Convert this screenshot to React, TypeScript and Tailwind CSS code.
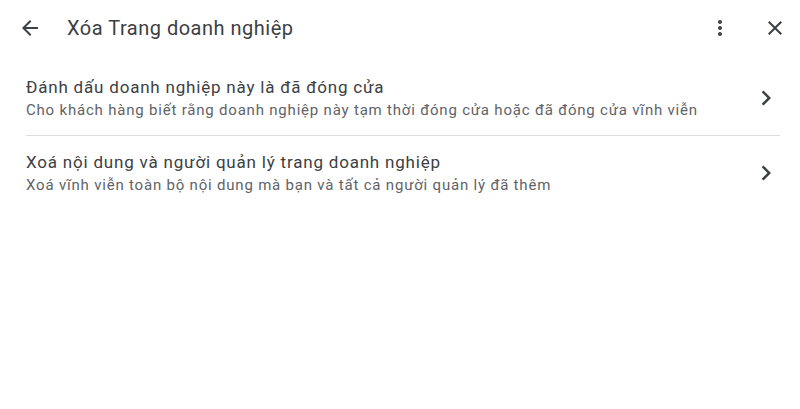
import React from "react";

const rows = [
  {
    title: "Đánh dấu doanh nghiệp này là đã đóng cửa",
    sub: "Cho khách hàng biết rằng doanh nghiệp này tạm thời đóng cửa hoặc đã đóng cửa vĩnh viễn",
  },
  {
    title: "Xoá nội dung và người quản lý trang doanh nghiệp",
    sub: "Xoá vĩnh viễn toàn bộ nội dung mà bạn và tất cả người quản lý đã thêm",
  },
];

function Chevron() {
  return (
    <svg width="30" height="30" viewBox="0 0 24 24" fill="#3c4043">
      <path d="M8.59 16.59 13.17 12 8.59 7.41 10 6l6 6-6 6z" />
    </svg>
  );
}

export default function App() {
  return (
    <div
      className="w-[800px] h-[409px] bg-white text-[#3c4043]"
      style={{ fontFamily: "Roboto, 'Noto Sans', sans-serif" }}
    >
      <header className="flex items-center h-[56px] pl-[18px] pr-[13px]">
        <svg width="24" height="24" viewBox="0 0 24 24" fill="#3c4043">
          <path d="M20 11H7.83l5.59-5.59L12 4l-8 8 8 8 1.41-1.41L7.83 13H20v-2z" />
        </svg>
        <h1 className="ml-[25px] text-[20px] tracking-[0.5px] font-normal text-[#3c4043] flex-1">
          Xóa Trang doanh nghiệp
        </h1>
        <svg width="24" height="24" viewBox="0 0 24 24" fill="#3c4043">
          <path d="M12 8c1.1 0 2-.9 2-2s-.9-2-2-2-2 .9-2 2 .9 2 2 2zm0 2c-1.1 0-2 .9-2 2s.9 2 2 2 2-.9 2-2-.9-2-2-2zm0 6c-1.1 0-2 .9-2 2s.9 2 2 2 2-.9 2-2-.9-2-2-2z" />
        </svg>
        <svg className="ml-[31px]" width="24" height="24" viewBox="0 0 24 24" fill="#3c4043">
          <path d="M19 6.41 17.59 5 12 10.59 6.41 5 5 6.41 10.59 12 5 17.59 6.41 19 12 13.41 17.59 19 19 17.59 13.41 12z" />
        </svg>
      </header>
      <div className="ml-[26px] mr-[20px]">
        {rows.map((r, i) => (
          <div
            key={i}
            className={
              "flex items-center pb-[14px] " +
              (i === 0 ? "pt-[19px] border-b border-[#dadce0]" : "pt-[14px]")
            }
          >
            <div className="flex-1">
              <div className="text-[17px] leading-[24px] tracking-[0.8px] text-[#3c4043]">
                {r.title}
              </div>
              <div className="text-[15px] leading-[22px] tracking-[0.8px] text-[#5f6368]">
                {r.sub}
              </div>
            </div>
            <div className="mr-[-1px]">
              <Chevron />
            </div>
          </div>
        ))}
      </div>
    </div>
  );
}
